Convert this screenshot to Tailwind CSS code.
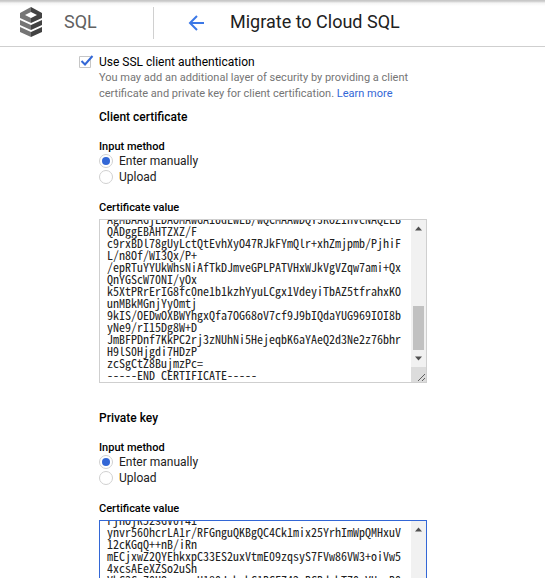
<!DOCTYPE html>
<html lang="en">
<head>
<meta charset="utf-8">
<title>Migrate to Cloud SQL</title>
<script src="https://cdn.jsdelivr.net/npm/@tailwindcss/browser@4"></script>
</head>
<body class="w-[545px] h-[578px] overflow-hidden bg-white font-[Roboto,sans-serif] text-[12px] leading-4 text-[#212121]">
<header class="h-[47px] border-b border-[#cfcfcf] flex items-center bg-linear-to-b from-[#c8c8c8] from-[1px] via-[#f4f4f4] via-[3px] to-white to-[6px]">
  <svg class="ml-[19px] w-6 h-8 shrink-0 -mt-[3px]" viewBox="0 0 24 32">
    <path fill="#757575" d="M1 7 12 1v5L6 9l6 3v5L1 12z"/>
    <path fill="#424242" d="M23 7 12 1v5l6 3-6 3v5l11-5z"/>
    <path fill="#757575" d="M1 14l11 5v5L1 19zM1 21l11 5v5L1 26z"/>
    <path fill="#424242" d="M23 14l-11 5v5l11-5zM23 21l-11 5v5l11-5z"/>
  </svg>
  <span class="ml-[21px] w-[89px] text-[18px] leading-6 text-[#616161] -mt-[3px]">SQL</span>
  <div class="w-px h-8 bg-[#d0d0d0] -mt-px"></div>
  <svg class="ml-[34px] w-[17px] h-4 shrink-0 -mt-px" viewBox="0 0 17 16" fill="none" stroke="#3b78e7" stroke-width="2"><path d="M16 8H2M9 1 2 8l7 7"/></svg>
  <h1 class="ml-[25px] text-[18px] leading-6 -mt-[3px] whitespace-nowrap">Migrate to Cloud SQL</h1>
</header>
<main class="pl-[79px]">
  <label class="flex h-[15px] mt-[7px]">
    <svg class="w-[15px] h-[15px] shrink-0" viewBox="0 0 15 15" fill="none"><path stroke="#c6c6c6" d="M.5 2.5h11v11H.5z"/><path stroke="#3367d6" stroke-width="2" d="m2.5 7 3.5 3.5L13.5 2"/></svg>
    <span class="ml-[5px] text-black whitespace-nowrap">Use SSL client authentication</span>
  </label>
  <div class="ml-5">
    <p class="mt-px text-[11px] text-[#757575] whitespace-nowrap">You may add an additional layer of security by providing a client<br>certificate and private key for client certification. <a class="text-[#3367d6]">Learn more</a></p>
    <h2 class="mt-[7px] font-medium text-black">Client certificate</h2>
    <h3 class="mt-[14px] text-[11px] font-medium text-black">Input method</h3>
    <label class="-mt-[2px] flex items-center h-4"><svg class="w-[14px] h-[14px]" viewBox="0 0 14 14"><circle cx="7" cy="7" r="6.5" fill="white" stroke="#d0d0d0"/><circle cx="7" cy="7" r="4" fill="#3367d6"/></svg><span class="ml-[6px]">Enter manually</span></label>
    <label class="flex items-center h-4"><svg class="w-[14px] h-[14px]" viewBox="0 0 14 14"><circle cx="7" cy="7" r="6.5" fill="white" stroke="#d0d0d0"/></svg><span class="ml-[6px]">Upload</span></label>
    <h3 class="mt-[15px] text-[11px] font-medium text-black">Certificate value</h3>
    <div class="mt-[3px] w-[328px] h-[164px] border border-[#cfcfcf] flex overflow-hidden">
      <pre class="-mt-[7px] w-[311px] pl-[7px] shrink-0 font-['Noto_Sans_Mono_CJK_SC','DejaVu_Sans_Mono',monospace] slashed-zero text-[12px] leading-3">AgMBAAGjEDAOMAwGA1UdEwEB/wQCMAAwDQYJKoZIhvcNAQELB
QADggEBAHTZXZ/F
c9rxBDl78gUyLctQtEvhXyO47RJkFYmQlr+xhZmjpmb/PjhiF
L/n8Of/WI3Qx/P+
/epRTuYYUkWhsNiAfTkDJmveGPLPATVHxWJkVgVZqw7ami+Qx
QnYGScW70NI/yOx
k5XtPRrErIG8fc0ne1b1kzhYyuLCgx1VdeyiTbAZ5tfrahxKO
unMBkMGnjYy0mtj
9kIS/OEDwOXBWYhgxQfa7OG68oV7cf9J9bIQdaYUG969IOI8b
yNe9/rI15Dg8W+D
JmBFPDnf7KkPC2rj3zNUhNi5HejeqbK6aYAeQ2d3Ne2z76bhr
H9lS0Hjgdi7HDzP
zcSgCtZ8BujmzPc=
-----END CERTIFICATE-----</pre>
      <div class="w-[15px] bg-[#f1f1f1] shrink-0 flex flex-col items-center">
        <svg class="mt-[6px] w-[7px] h-[5px] shrink-0" viewBox="0 0 7 5"><path fill="#505050" d="M0 4.5 3.5.5 7 4.5z"/></svg>
        <div class="mt-[75px] w-[11px] h-[44px] bg-[#c1c1c1] shrink-0"></div>
        <svg class="mt-[6px] w-[7px] h-[5px] shrink-0" viewBox="0 0 7 5"><path fill="#505050" d="M0 .5h7L3.5 4.5z"/></svg>
        <svg class="mt-auto w-[15px] h-[15px] shrink-0 bg-[#dcdcdc]" viewBox="0 0 15 15"><path stroke="#606060" d="m7 14 7-7M11 14l3-3"/></svg>
      </div>
    </div>
    <h2 class="mt-[27px] font-medium text-black">Private key</h2>
    <h3 class="mt-[14px] text-[11px] font-medium text-black">Input method</h3>
    <label class="-mt-[2px] flex items-center h-4"><svg class="w-[14px] h-[14px]" viewBox="0 0 14 14"><circle cx="7" cy="7" r="6.5" fill="white" stroke="#d0d0d0"/><circle cx="7" cy="7" r="4" fill="#3367d6"/></svg><span class="ml-[6px]">Enter manually</span></label>
    <label class="flex items-center h-4"><svg class="w-[14px] h-[14px]" viewBox="0 0 14 14"><circle cx="7" cy="7" r="6.5" fill="white" stroke="#d0d0d0"/></svg><span class="ml-[6px]">Upload</span></label>
    <h3 class="mt-[15px] text-[11px] font-medium text-black">Certificate value</h3>
    <div class="mt-[3px] w-[328px] h-[58px] border border-b-0 border-[#3367d6] flex overflow-hidden">
      <pre class="-mt-[7px] w-[311px] pl-[7px] shrink-0 font-['Noto_Sans_Mono_CJK_SC','DejaVu_Sans_Mono',monospace] slashed-zero text-[12px] leading-3">rjhOjR52sGV0f41
ynvr560hcrLA1r/RFGnguQKBgQC4Ck1mix25YrhImWpQMHxuV
12cKGqQ++nB/iRn
mECjxwZ2QYEhkxpC33ES2uxVtmE09zqsyS7FVw86VW3+oiVw5
4xcsAEeXZSo2uSh
VhC3CgZ0UOgxpqcU180JabshC1BCFZ42pBCBdzhTZ0uVUncB0</pre>
      <div class="w-[15px] bg-[#f1f1f1] shrink-0 flex flex-col items-center">
        <svg class="mt-[6px] w-[7px] h-[5px] shrink-0" viewBox="0 0 7 5"><path fill="#505050" d="M0 4.5 3.5.5 7 4.5z"/></svg>
      </div>
    </div>
  </div>
</main>
</body>
</html>
